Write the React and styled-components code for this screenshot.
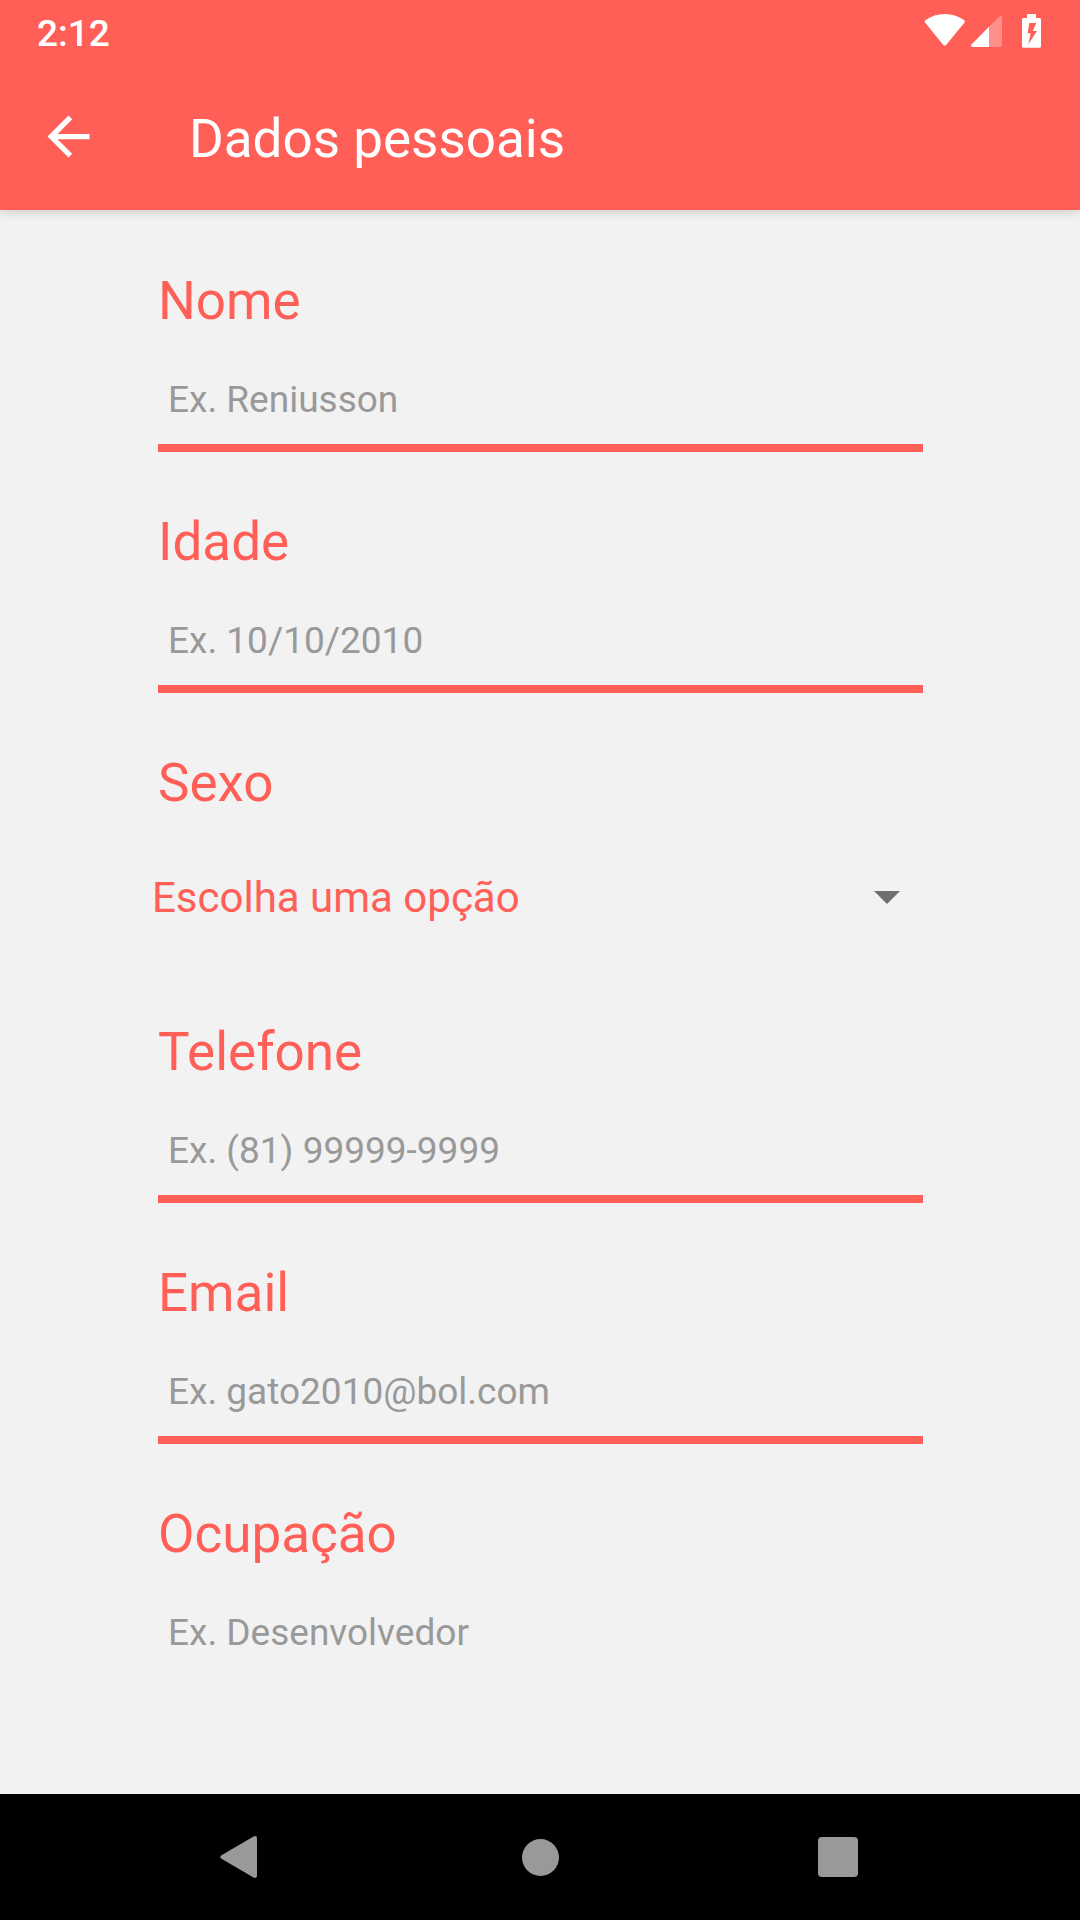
import React from "react";
import styled, { createGlobalStyle } from "styled-components";

const coral = "#ff5f57";
const surface = "#f2f2f2";

const GlobalStyle = createGlobalStyle`
  *, *::before, *::after { box-sizing: border-box; }
  body {
    margin: 0;
    background: ${surface};
    font-family: Roboto, "Noto Sans", sans-serif;
  }
`;

const Screen = styled.div`
  display: flex;
  flex-direction: column;
  min-height: 100vh;
`;

const Header = styled.header`
  background: ${coral};
  color: #fff;
  box-shadow: 0 2px 10px rgba(0, 0, 0, 0.16);
`;

const StatusBar = styled.div`
  display: flex;
  justify-content: space-between;
  align-items: center;
  height: 63px;
  padding: 0 38px 0 37px;
`;

const Clock = styled.time`
  padding-top: 4px;
  font-size: 37px;
  font-weight: 500;
  line-height: 44px;
`;

const StatusIcons = styled.div`
  display: flex;

  svg {
    display: block;
    height: 43px;
  }
`;

const Toolbar = styled.div`
  display: flex;
  align-items: center;
  gap: 89px;
  height: 147px;
  padding: 0 37px;
`;

const BackButton = styled.button`
  padding: 0;
  border: 0;
  background: none;
  color: inherit;

  svg {
    display: block;
    width: 63px;
    height: 63px;
  }
`;

const Title = styled.h1`
  margin: 0;
  padding-top: 4px;
  font-size: 53px;
  font-weight: 400;
  line-height: 62px;
`;

const Form = styled.form`
  display: flex;
  flex-direction: column;
  gap: 59px;
  padding: 60px 157px 60px 158px;
`;

const Field = styled.div`
  display: flex;
  flex-direction: column;
  gap: 24px;
`;

const Label = styled.label`
  color: ${coral};
  font-size: 53px;
  line-height: 62px;
`;

const TextInput = styled.input`
  width: 100%;
  height: 96px;
  padding: 0 10px 2px;
  border: 0;
  border-bottom: 8px solid ${(p) => (p.$underlined ? coral : "transparent")};
  border-radius: 0;
  outline: none;
  background: transparent;
  color: #333;
  font-family: inherit;
  font-size: 37px;

  &::placeholder {
    color: #999;
    opacity: 1;
  }
`;

const Picker = styled.div`
  display: grid;
  align-items: center;
  margin: 0 0 6px -6px;

  > * {
    grid-area: 1 / 1;
  }

  svg {
    justify-self: end;
    width: 26px;
    height: 13px;
    margin-right: 23px;
    pointer-events: none;
  }
`;

const Select = styled.select`
  width: 100%;
  height: 118px;
  padding: 0;
  border: 0;
  outline: none;
  appearance: none;
  background: transparent;
  color: ${coral};
  font-family: inherit;
  font-size: 42px;
`;

const NavBar = styled.nav`
  display: flex;
  height: 126px;
  margin-top: auto;
  padding: 0 93px;
  background: #000;
`;

const NavButton = styled.button`
  display: flex;
  flex: 1;
  justify-content: center;
  align-items: center;
  padding: 0;
  border: 0;
  background: none;
  color: #999;

  svg {
    width: 48px;
    height: 48px;
  }
`;

const fields = [
  { id: "nome", label: "Nome", placeholder: "Ex. Reniusson", type: "text", underlined: true },
  { id: "idade", label: "Idade", placeholder: "Ex. 10/10/2010", type: "text", underlined: true },
  { id: "sexo", label: "Sexo", options: ["Escolha uma opção", "Feminino", "Masculino"] },
  { id: "telefone", label: "Telefone", placeholder: "Ex. (81) 99999-9999", type: "tel", underlined: true },
  { id: "email", label: "Email", placeholder: "Ex. gato2010@bol.com", type: "email", underlined: true },
  { id: "ocupacao", label: "Ocupação", placeholder: "Ex. Desenvolvedor", type: "text", underlined: false },
];

function WifiIcon() {
  return (
    <svg width="46" viewBox="0 0 46 43" fill="currentColor" aria-hidden="true">
      <path d="M1 12.5Q0 11 1.5 10Q10 4 20.700 4T40 10Q41.500 11 40.500 12.500L22.300 34.700Q20.700 36.500 19.100 34.700Z" />
    </svg>
  );
}

function SignalIcon() {
  return (
    <svg width="50" viewBox="0 0 50 43" fill="currentColor" aria-hidden="true">
      <path fillOpacity="0.3" d="M19 16.500L30 6.300Q32 5 32 7.500V35Q32 37 30 37H19Z" />
      <path d="M19 16.700V37H2.800Q0 37 1.500 34.500Z" />
    </svg>
  );
}

function BatteryIcon() {
  return (
    <svg width="22" viewBox="0 0 22 43" fill="currentColor" aria-hidden="true">
      <path
        fillRule="evenodd"
        d="M7 4H16V8H19.500Q21 8 21 9.500V36.300Q21 37.800 19.500 37.800H3.500Q2 37.800 2 36.300V9.500Q2 8 3.500 8H7ZM9.300 13L7.700 23.300H10.700L8.300 34.300L17 21H12.700L16.300 13Z"
      />
    </svg>
  );
}

function FormField({ id, label, placeholder, type, underlined, options }) {
  return (
    <Field>
      <Label htmlFor={id}>{label}</Label>
      {options ? (
        <Picker>
          <Select id={id} name={id}>
            {options.map((option) => (
              <option key={option}>{option}</option>
            ))}
          </Select>
          <svg viewBox="0 0 26 13" fill="#6f6f6f" aria-hidden="true">
            <path d="M0 0H26L13 13Z" />
          </svg>
        </Picker>
      ) : (
        <TextInput id={id} name={id} type={type} placeholder={placeholder} $underlined={underlined} />
      )}
    </Field>
  );
}

export default function App() {
  return (
    <Screen>
      <GlobalStyle />
      <Header>
        <StatusBar>
          <Clock>2:12</Clock>
          <StatusIcons>
            <WifiIcon />
            <SignalIcon />
            <BatteryIcon />
          </StatusIcons>
        </StatusBar>
        <Toolbar>
          <BackButton type="button" aria-label="Voltar">
            <svg viewBox="0 0 24 24" fill="currentColor" aria-hidden="true">
              <path d="M20 11H7.830l5.590-5.590L12 4l-8 8 8 8 1.410-1.410L7.830 13H20v-2z" />
            </svg>
          </BackButton>
          <Title>Dados pessoais</Title>
        </Toolbar>
      </Header>
      <Form>
        {fields.map((field) => (
          <FormField key={field.id} {...field} />
        ))}
      </Form>
      <NavBar>
        <NavButton type="button" aria-label="Voltar">
          <svg viewBox="0 0 48 48" fill="currentColor" aria-hidden="true">
            <path d="M3.500 22.200L35.500 3.500Q39 2 39 5.500V42.500Q39 46 35.500 44.500L3.500 25.800Q1 24 3.500 22.200Z" />
          </svg>
        </NavButton>
        <NavButton type="button" aria-label="Início">
          <svg viewBox="0 0 48 48" fill="currentColor" aria-hidden="true">
            <circle cx="24.500" cy="24.500" r="18.500" />
          </svg>
        </NavButton>
        <NavButton type="button" aria-label="Recentes">
          <svg viewBox="0 0 48 48" fill="currentColor" aria-hidden="true">
            <rect x="4" y="4" width="40" height="40" rx="4" />
          </svg>
        </NavButton>
      </NavBar>
    </Screen>
  );
}
